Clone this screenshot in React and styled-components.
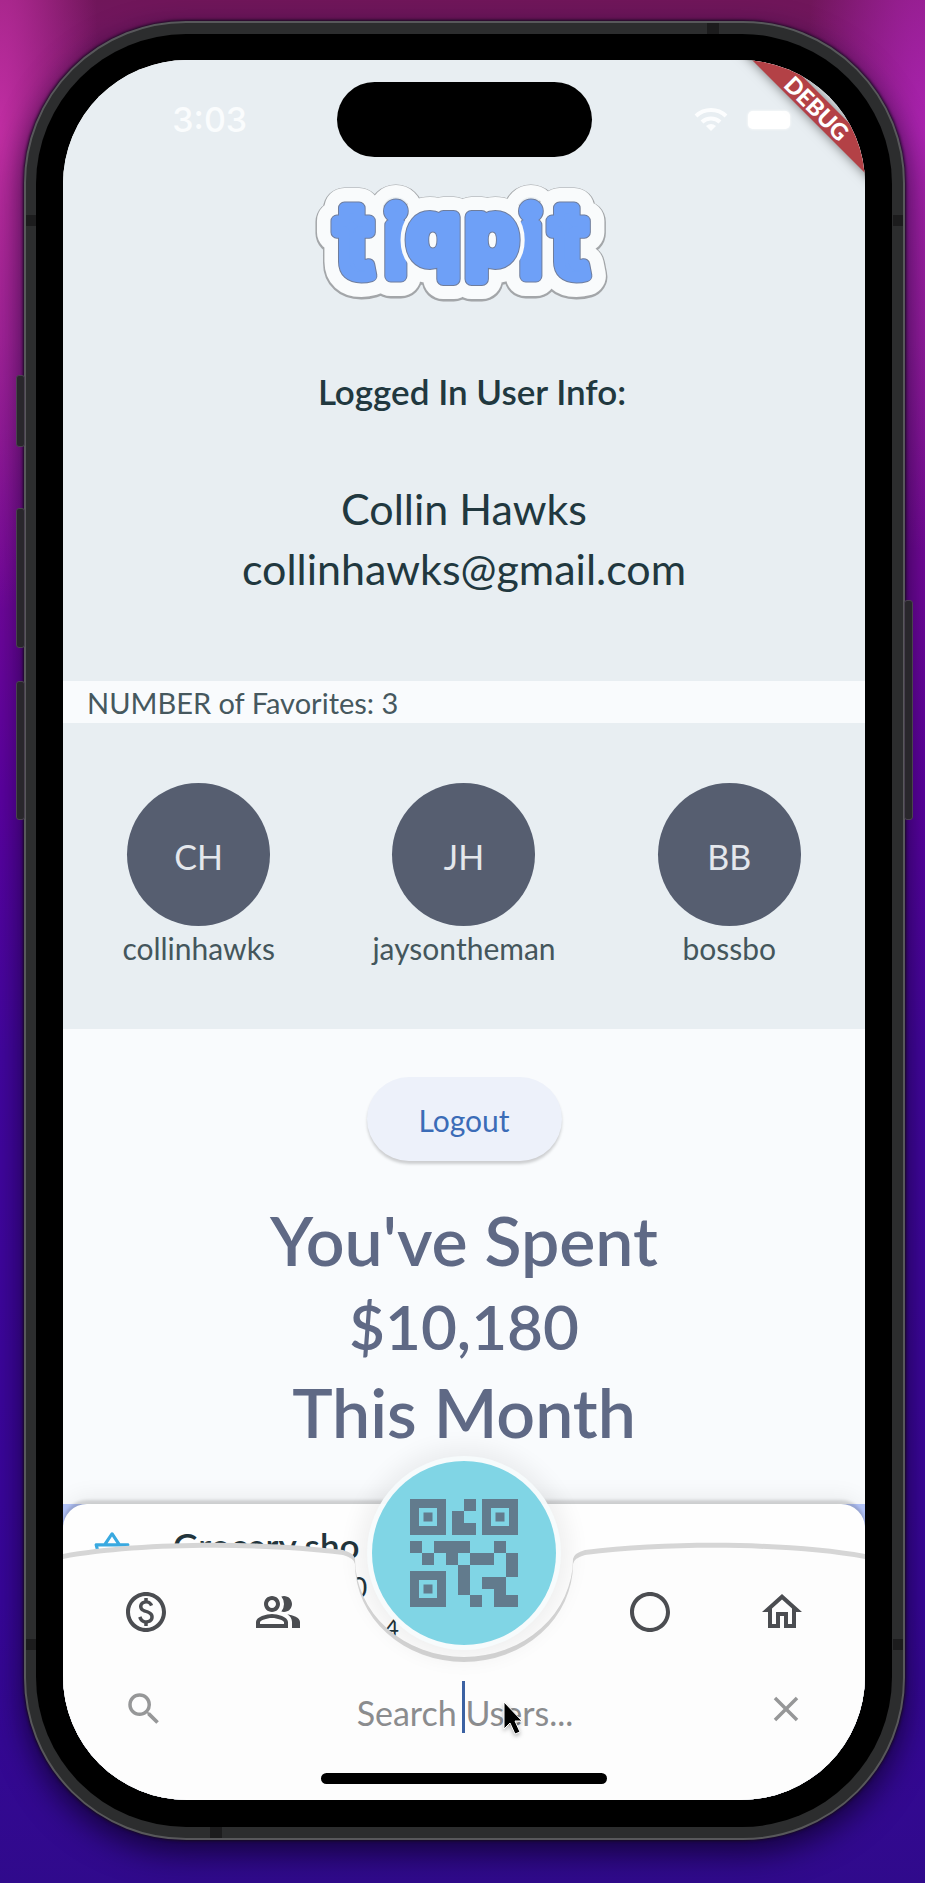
import React from "react";
import styled, { createGlobalStyle } from "styled-components";
import {
  MdOutlinePaid,
  MdOutlinePeopleAlt,
  MdOutlineCircle,
  MdOutlineHome,
  MdSearch,
  MdClose,
  MdOutlineShoppingBasket,
  MdQrCode2,
} from "react-icons/md";

const GlobalStyle = createGlobalStyle`
  *, *::before, *::after { box-sizing: border-box; }
  body { margin: 0; background: #2c0878; }
  body, button, input { font-family: Lato, "Open Sans", sans-serif; }
  h1, h2, p, ul { margin: 0; padding: 0; font-weight: 400; }
  button { border: 0; padding: 0; background: none; cursor: pointer; }
`;

const Desktop = styled.main`
  display: flex;
  min-height: 100vh;
  padding: 21px 20px 43px 24px;
  background:
    radial-gradient(ellipse 100px 480px at 0 130px, rgba(200, 48, 168, 0.9), rgba(200, 45, 170, 0)) no-repeat,
    radial-gradient(ellipse 120px 420px at 100% 130px, rgba(176, 36, 182, 0.9), rgba(176, 35, 182, 0)) no-repeat,
    linear-gradient(180deg, #70165a 0, #7c158a 18%, #73089a 30%, #5c02a0 42%, #43069f 56%, #38069a 85%, #300a8c 100%);
`;

const Phone = styled.div`
  position: relative;
  display: flex;
  flex: 1;
  border: 2px solid #58585b;
  border-radius: 162px;
  padding: 11px 11px 11px 10px;
  background: #2c2d2e;
  box-shadow: 0 0 3px 1px #160a20, 0 12px 32px rgba(10, 0, 30, 0.75);
`;

const Bezel = styled.div`
  display: flex;
  flex: 1;
  padding: 26px 27px 27px;
  border-radius: 150px;
  background: #000;
`;

const SideKey = styled.span`
  position: absolute;
  ${(p) => p.$side}: -10px;
  top: ${(p) => p.$top}px;
  width: 9px;
  height: ${(p) => p.$height}px;
  border: 1px solid #4a4250;
  border-radius: 3px;
  background: #29272c;
`;

const Antenna = styled.span`
  position: absolute;
  ${(p) => p.$edge}: 0;
  ${(p) => (p.$edge === "top" || p.$edge === "bottom" ? "left" : "top")}: ${(p) => p.$at}px;
  width: ${(p) => (p.$edge === "top" || p.$edge === "bottom" ? 12 : 10)}px;
  height: 11px;
  background: #1c1c1d;
`;

const Screen = styled.div`
  position: relative;
  flex: 1;
  overflow: hidden;
  border-radius: 124px;
  background: #f9fbfd;
  color: #21383f;
`;

const Profile = styled.header`
  display: flex;
  flex-direction: column;
  align-items: center;
  padding: 22px 0 82px;
  background: #e8eef2;
`;

const StatusBar = styled.div`
  display: grid;
  grid-template-columns: 1fr 255px 1fr;
  align-items: center;
  width: 100%;
  color: #fafcfd;
`;

const Clock = styled.time`
  padding-left: 20px;
  text-align: center;
  font: 500 34px Inter, sans-serif;
`;

const Island = styled.div`
  height: 75px;
  border-radius: 38px;
  background: #000;
`;

const StatusIcons = styled.div`
  display: flex;
  align-items: center;
  justify-content: center;
  gap: 20px;
  padding-left: 28px;
`;

const Battery = styled.span`
  width: 42px;
  height: 18px;
  border-radius: 5px;
  background: #fff;
  box-shadow: 0 0 3px #fff;
`;

const Ribbon = styled.div`
  position: absolute;
  top: 36px;
  right: -52px;
  width: 200px;
  height: 24px;
  transform: rotate(45deg);
  background: #b34146;
  box-shadow: 0 0 12px rgba(0, 0, 0, 0.5);
  color: #fff;
  text-align: center;
  font: 900 23px/24px Lato, sans-serif;
`;

const Logo = styled.svg`
  display: block;
  margin-top: 22px;
`;

const Caption = styled.h2`
  margin: 62px 0 68px;
  padding-left: 16px;
  font-size: 35px;
  line-height: 40px;
  font-weight: 600;
`;

const Identity = styled.p`
  font-size: 43px;
  line-height: 60px;
`;

const CountBar = styled.p`
  padding: 2px 24px 0;
  font-size: 29px;
  line-height: 40px;
  color: #46585e;
`;

const Favorites = styled.ul`
  display: grid;
  grid-template-columns: repeat(3, 1fr);
  padding: 60px 3px 63px;
  background: #e8eef2;
  list-style: none;
`;

const Favorite = styled.li`
  display: flex;
  flex-direction: column;
  align-items: center;
  gap: 4px;
  font-size: 30px;
  line-height: 36px;
  color: #44565c;
`;

const Avatar = styled.span`
  display: grid;
  place-items: center;
  width: 143px;
  height: 143px;
  padding-top: 4px;
  border-radius: 50%;
  background: #565e70;
  color: #e4e7ec;
  font-size: 34px;
`;

const Spending = styled.section`
  display: flex;
  flex-direction: column;
  align-items: center;
  padding: 48px 0 49px;
`;

const LogoutButton = styled.button`
  width: 195px;
  height: 84px;
  padding-top: 2px;
  border-radius: 42px;
  background: #edf1fa;
  box-shadow: 0 3px 3px rgba(0, 0, 0, 0.18);
  color: #3b6cb7;
  font-size: 30px;
`;

const Total = styled.h1`
  margin-top: 36px;
  color: #5f6985;
  text-align: center;
  font-size: 68px;
  line-height: 86px;
  font-weight: 600;
`;

const Amount = styled.span`
  display: block;
  font-size: 62px;
`;

const Feed = styled.section`
  background: #b5c6fb;
`;

const Expense = styled.article`
  display: flex;
  gap: 42px;
  height: 296px;
  padding: 21px 30px;
  border-radius: 24px 24px 0 0;
  background: #fefefe;
  box-shadow: 0 -4px 3px rgba(0, 0, 0, 0.14), 0 -8px 22px rgba(0, 0, 0, 0.06);
  color: #22343b;
`;

const BasketIcon = styled(MdOutlineShoppingBasket)`
  margin-top: 4px;
  color: #39a9e0;
`;

const ExpenseText = styled.div`
  display: flex;
  flex-direction: column;
  font-size: 28px;
  line-height: 44px;
`;

const ExpenseTitle = styled.strong`
  font-size: 35px;
  line-height: 40px;
  font-weight: 600;
`;

const ExpenseDetail = styled.span`
  padding-left: 178px;
`;

const ExpenseNote = styled.span`
  padding-left: 212px;
  font-size: 24px;
  line-height: 36px;
`;

const Dock = styled.footer`
  position: absolute;
  left: 0;
  right: 0;
  bottom: 0;
  height: 260px;
`;

const DockShape = styled.svg`
  position: absolute;
  inset: 0;
  width: 100%;
  height: 100%;
`;

const DockBody = styled.div`
  position: relative;
  display: flex;
  flex-direction: column;
  padding-top: 42px;
`;

const Tabs = styled.nav`
  display: grid;
  grid-template-columns: 1fr 1fr 239px 1fr 1fr;
  padding: 0 17px;
`;

const Tab = styled.button`
  display: grid;
  place-items: center;
  height: 60px;
  color: #4b4d51;
`;

const ScanButton = styled.button`
  position: absolute;
  top: -79px;
  left: 50%;
  display: grid;
  place-items: center;
  width: 184px;
  height: 184px;
  margin-left: -92px;
  border-radius: 50%;
  background: #80d5e5;
  box-shadow: 0 0 0 5px rgba(247, 251, 252, 0.95), 0 0 22px 14px rgba(0, 0, 0, 0.06);
  color: #627b8d;
`;

const SearchRow = styled.label`
  display: grid;
  grid-template-columns: 42px 1fr 42px;
  align-items: center;
  height: 60px;
  margin-top: 37px;
  padding: 0 58px 0 60px;
  color: #969798;
`;

const SearchField = styled.input`
  width: 100%;
  height: 52px;
  border: 0;
  padding: 6px 0 0;
  outline: 0;
  background: none;
  text-align: center;
  font-size: 34px;
  &::placeholder { color: #8b8c8e; opacity: 1; }
`;

const Caret = styled.span`
  position: absolute;
  left: 50%;
  top: 141px;
  width: 3px;
  height: 52px;
  margin-left: -2px;
  background: #3c62a3;
`;

const Pointer = styled.svg`
  position: absolute;
  left: 440px;
  top: 161px;
  filter: drop-shadow(0 2px 2px rgba(0, 0, 0, 0.3));
`;

const HomeIndicator = styled.span`
  align-self: center;
  width: 286px;
  height: 11px;
  margin-top: 34px;
  border-radius: 6px;
  background: #000;
`;

const favorites = [
  { initials: "CH", name: "collinhawks" },
  { initials: "JH", name: "jaysontheman" },
  { initials: "BB", name: "bossbo" },
];

function TiqpitLogo() {
  const round = { strokeLinejoin: "round", strokeLinecap: "round" };
  return (
    <Logo width="304" height="130" viewBox="312 176 304 130" role="img" aria-label="tiqpit" {...round}>
      <defs>
        <text id="outer" fontFamily="Inter, sans-serif" fontWeight="700">
          <tspan x="336" y="273" fontSize="100">t</tspan>
          <tspan x="384" y="273" fontSize="94" fontWeight="500">i</tspan>
          <tspan x="519" y="273" fontSize="94" fontWeight="500">i</tspan>
          <tspan x="551" y="273" fontSize="100">t</tspan>
        </text>
        <text id="inner" fontFamily="Inter, sans-serif" fontWeight="600" fontSize="82">
          <tspan x="408" y="259">q</tspan>
          <tspan x="466" y="259">p</tspan>
        </text>
      </defs>
      <g stroke="#a3a6a9" strokeWidth="43" transform="translate(0 1)">
        <use href="#outer" />
        <use href="#inner" />
      </g>
      <g stroke="#f9fbfc" strokeWidth="40">
        <use href="#outer" />
        <use href="#inner" />
      </g>
      <use href="#outer" stroke="#6f7d9c" strokeWidth="13" />
      <use href="#outer" stroke="#6ea0f7" strokeWidth="11" fill="#6ea0f7" />
      <use href="#inner" stroke="#f9fbfc" strokeWidth="22" />
      <use href="#inner" stroke="#6f7d9c" strokeWidth="14" />
      <use href="#inner" stroke="#6ea0f7" strokeWidth="12" fill="#6ea0f7" />
    </Logo>
  );
}

function Wifi() {
  return (
    <svg width="34" height="25" viewBox="0 0 34 25" fill="none" stroke="#fcfdfe" strokeWidth="4">
      <path d="M2 9a22 22 0 0 1 30 0M8 15a13 13 0 0 1 18 0" />
      <path d="M17 24l-5-5a8 8 0 0 1 10 0z" fill="#fcfdfe" stroke="none" />
    </svg>
  );
}

const dockPath =
  "M0 19C70 6 190 4 280 15Q291 18 292 24A109 98 0 0 0 510 24Q511 18 522 15C612 4 732 6 802 19V270H0Z";

export default function App() {
  return (
    <Desktop>
      <GlobalStyle />
      <Phone>
        <SideKey $side="left" $top={352} $height={72} />
        <SideKey $side="left" $top={485} $height={140} />
        <SideKey $side="left" $top={658} $height={139} />
        <SideKey $side="right" $top={577} $height={220} />
        <Antenna $edge="top" $at={681} />
        <Antenna $edge="left" $at={192} />
        <Antenna $edge="right" $at={192} />
        <Antenna $edge="left" $at={1616} />
        <Antenna $edge="right" $at={1616} />
        <Antenna $edge="bottom" $at={184} />
        <Bezel>
          <Screen>
            <Profile>
              <StatusBar>
                <Clock>3:03</Clock>
                <Island />
                <StatusIcons>
                  <Wifi />
                  <Battery />
                </StatusIcons>
              </StatusBar>
              <TiqpitLogo />
              <Caption>Logged In User Info:</Caption>
              <Identity>Collin Hawks</Identity>
              <Identity>collinhawks@gmail.com</Identity>
            </Profile>
            <CountBar>NUMBER of Favorites: 3</CountBar>
            <Favorites>
              {favorites.map((user) => (
                <Favorite key={user.name}>
                  <Avatar>{user.initials}</Avatar>
                  {user.name}
                </Favorite>
              ))}
            </Favorites>
            <Spending>
              <LogoutButton type="button">Logout</LogoutButton>
              <Total>
                You've Spent
                <Amount>$10,180</Amount>
                This Month
              </Total>
            </Spending>
            <Feed>
              <Expense>
                <BasketIcon size={38} />
                <ExpenseText>
                  <ExpenseTitle>Grocery sho</ExpenseTitle>
                  <ExpenseDetail>0</ExpenseDetail>
                  <ExpenseNote>4</ExpenseNote>
                </ExpenseText>
              </Expense>
            </Feed>
            <Dock>
              <DockShape viewBox="0 0 802 260" preserveAspectRatio="none" aria-hidden="true">
                <path d={dockPath} fill="#d6d6d6" transform="translate(0 -5)" />
                <path d={dockPath} fill="#fdfdfd" />
              </DockShape>
              <DockBody>
                <Tabs>
                  <Tab type="button" aria-label="Payments"><MdOutlinePaid size={48} /></Tab>
                  <Tab type="button" aria-label="People"><MdOutlinePeopleAlt size={48} /></Tab>
                  <span />
                  <Tab type="button" aria-label="Activity"><MdOutlineCircle size={48} /></Tab>
                  <Tab type="button" aria-label="Home"><MdOutlineHome size={48} /></Tab>
                </Tabs>
                <SearchRow>
                  <MdSearch size={42} />
                  <SearchField type="text" placeholder="Search Users..." aria-label="Search Users" />
                  <MdClose size={42} />
                </SearchRow>
                <HomeIndicator />
              </DockBody>
              <ScanButton type="button" aria-label="Scan code">
                <MdQrCode2 size={144} />
              </ScanButton>
              <Caret />
              <Pointer width="20" height="34" viewBox="0 0 20 34">
                <path d="M1 1v27l6-6 5 11 5-2-5-11h7z" fill="#000" stroke="#fff" strokeWidth="1" />
              </Pointer>
            </Dock>
            <Ribbon>DEBUG</Ribbon>
          </Screen>
        </Bezel>
      </Phone>
    </Desktop>
  );
}
